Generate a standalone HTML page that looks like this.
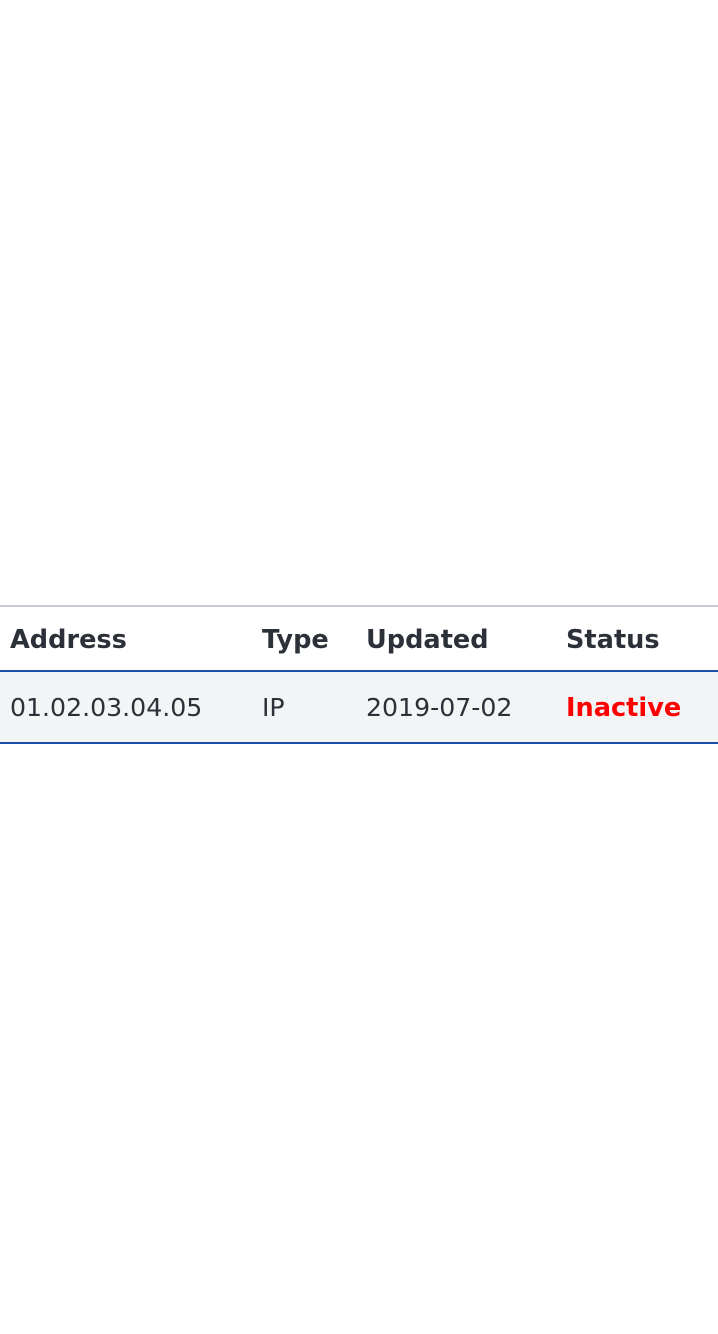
<!DOCTYPE html>
<html><head><style>
body{margin:0;width:718px;height:1334px;background:#fff;font-family:"DejaVu Sans",sans-serif;position:relative;overflow:hidden}
.top{position:absolute;top:605px;left:0;width:718px;height:2px;background:#cacbd8}
.hdr{position:absolute;top:607px;left:0;width:718px;height:63px;background:#fff;border-bottom:2px solid #1c4fa8}
.row{position:absolute;top:672px;left:0;width:718px;height:70px;background:#f3f4f6;border-bottom:2px solid #1c4fa8}
.c{position:absolute;font-size:25.6px;color:#2c3038;white-space:nowrap}
.hdr .c{font-weight:bold;top:18px}
.row .c{top:21px;font-size:25.2px}
</style></head><body>
<div class="top"></div>
<div class="hdr">
<span class="c" style="left:10px">Address</span>
<span class="c" style="left:262px">Type</span>
<span class="c" style="left:366px">Updated</span>
<span class="c" style="left:566px">Status</span>
</div>
<div class="row">
<span class="c" style="left:10px">01.02.03.04.05</span>
<span class="c" style="left:262px">IP</span>
<span class="c" style="left:366px">2019-07-02</span>
<span class="c" style="left:566px;color:#ff0000;font-weight:bold;font-size:25.6px">Inactive</span>
</div>
</body></html>
